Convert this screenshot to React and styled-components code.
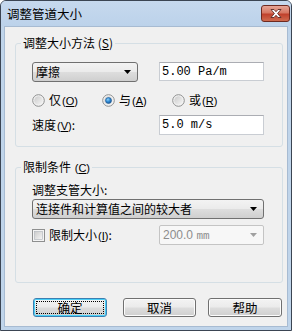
import React from "react";
import styled, { createGlobalStyle } from "styled-components";

const GlobalStyle = createGlobalStyle`
  body {
    margin: 0;
    background: #ffffff;
    font-family: "Noto Sans CJK SC", "Liberation Sans", sans-serif;
    font-size: 12px;
    color: #000;
  }
`;

const Window = styled.div`
  width: 292px;
  height: 331px;
  box-sizing: border-box;
  border: 1px solid #3b4553;
  border-radius: 6px 6px 0 0;
  background: #bfd4ea;
  display: flex;
  flex-direction: column;
`;

const TitleBar = styled.div`
  height: 25px;
  flex: none;
  display: flex;
  align-items: center;
  justify-content: space-between;
  padding: 0 1px 0 6px;
  background: linear-gradient(#c6d9ee, #bcd2ea);
  border-radius: 5px 5px 0 0;
`;

const Title = styled.span`
  font-size: 12.5px;
  line-height: 16px;
  margin-top: 1px;
`;

const CloseButton = styled.div`
  width: 29px;
  height: 17px;
  box-sizing: border-box;
  border: 1px solid #6e2a20;
  border-radius: 3px;
  background: linear-gradient(#e7a596 0%, #d67863 45%, #c0412c 55%, #cf6b4f 100%);
  display: flex;
  align-items: center;
  justify-content: center;
  margin-top: -1px;
`;

const Client = styled.div`
  flex: 1;
  margin: 0 3px 3px 3px;
  border: 1px solid #a7bbd2;
  background: #f0f0f0;
  padding: 9px 4px 0 10px;
  display: flex;
  flex-direction: column;
`;

const Group = styled.fieldset`
  margin: 0 0 ${(p) => p.$gap || 0}px 0;
  padding: 0;
  border: 1px solid #d5dfe5;
  border-radius: 3px;
  min-width: 0;
`;

const Legend = styled.legend`
  margin-left: 5px;
  padding: 0 2px;
  line-height: 14px;
  font-size: 12px;
`;

const GroupBody = styled.div`
  padding: ${(p) => p.$top}px 18px ${(p) => p.$bottom}px 16px;
  display: flex;
  flex-direction: column;
`;

const Row = styled.div`
  display: flex;
  align-items: center;
  justify-content: ${(p) => p.$justify || "space-between"};
  height: ${(p) => p.$h || 20}px;
  margin-top: ${(p) => p.$mt || 0}px;
`;

const Combo = styled.div`
  width: ${(p) => p.$w}px;
  height: 20px;
  box-sizing: border-box;
  border: 1px solid #707070;
  border-radius: 3px;
  background: linear-gradient(#f3f3f3 0%, #ebebeb 48%, #dddddd 52%, #cfcfcf 100%);
  display: flex;
  align-items: center;
  justify-content: space-between;
  padding: 0 6px 0 3px;
  line-height: 16px;
`;

const TextBox = styled.div`
  width: 105px;
  height: ${(p) => p.$h || 20}px;
  box-sizing: border-box;
  border: 1px solid #c9cdd3;
  border-top-color: #abadb3;
  background: #ffffff;
  display: flex;
  align-items: center;
  padding-left: 2px;
  font-family: "Liberation Mono", monospace;
  font-size: 12px;
  align-self: ${(p) => p.$align || "center"};
`;

const DisabledCombo = styled.div`
  width: 105px;
  height: 20px;
  box-sizing: border-box;
  border: 1px solid #c4c4c4;
  border-radius: 2px;
  background: #f7f7f7;
  color: #8d8d8d;
  display: flex;
  align-items: center;
  justify-content: space-between;
  padding: 0 6px 0 3px;
  font-family: "Liberation Sans", sans-serif;
  font-size: 12px;
`;

const Mm = styled.span`
  font-family: "Liberation Mono", monospace;
  font-size: 11px;
`;

const Option = styled.label`
  display: flex;
  align-items: center;
  gap: 4px;
  width: ${(p) => p.$w}px;
  line-height: 14px;
`;

const Acc = styled.span`
  font-family: "Liberation Sans", sans-serif;
  font-size: 11px;
  margin-left: 1px;
`;

const Label = styled.span`
  line-height: 14px;
`;

const Buttons = styled.div`
  display: flex;
  margin-top: 15px;
  padding-left: 18px;
`;

const Button = styled.div`
  width: ${(p) => p.$w || 74}px;
  height: 19px;
  margin-left: ${(p) => p.$ml || 0}px;
  box-sizing: border-box;
  border: 1px solid ${(p) => (p.$default ? "#3c7fb1" : "#707070")};
  border-radius: 3px;
  background: linear-gradient(#f3f3f3 0%, #ebebeb 48%, #dddddd 52%, #cfcfcf 100%);
  box-shadow: ${(p) => (p.$default ? "inset 0 0 0 1px #48d0f8" : "inset 0 0 0 1px #fcfcfc")};
  display: flex;
  align-items: center;
  justify-content: center;
  font-size: 12.5px;
  line-height: 15px;
  padding: 1px;
`;

const Focus = styled.div`
  flex: 1;
  align-self: stretch;
  margin: 1px;
  border: 1px dotted #000;
  display: flex;
  align-items: center;
  justify-content: center;
`;

const Arrow = ({ color = "#000" }) => (
  <svg width="7" height="4" viewBox="0 0 7 4">
    <path d="M0 0h7L3.5 4z" fill={color} />
  </svg>
);

const Radio = ({ checked }) => (
  <svg width="13" height="13" viewBox="0 0 13 13">
    <defs>
      <linearGradient id="rg" x1="0" y1="0" x2="1" y2="1">
        <stop offset="0" stopColor="#cbcbcb" />
        <stop offset="1" stopColor="#f6f6f6" />
      </linearGradient>
      <radialGradient id="rd" cx="0.4" cy="0.35" r="0.7">
        <stop offset="0" stopColor="#8fd2fb" />
        <stop offset="0.5" stopColor="#2f8ad4" />
        <stop offset="1" stopColor="#1a4f8c" />
      </radialGradient>
    </defs>
    <circle cx="6.5" cy="6.5" r="5.8" fill="#f4f4f4" stroke="#8e8f8f" strokeWidth="1" />
    <circle cx="6.5" cy="6.5" r="4.3" fill="url(#rg)" />
    {checked && <circle cx="6.5" cy="6.5" r="3" fill="url(#rd)" stroke="#1d5d99" strokeWidth="0.6" />}
  </svg>
);

const Check = () => (
  <svg width="13" height="13" viewBox="0 0 13 13">
    <defs>
      <linearGradient id="cg" x1="0" y1="0" x2="1" y2="1">
        <stop offset="0" stopColor="#cbcbcb" />
        <stop offset="1" stopColor="#f6f6f6" />
      </linearGradient>
    </defs>
    <rect x="0.5" y="0.5" width="12" height="12" fill="#f4f4f4" stroke="#8e8f8f" />
    <rect x="2.5" y="2.5" width="8" height="8" fill="url(#cg)" stroke="#aeb3b9" strokeWidth="0.6" />
  </svg>
);

const CloseIcon = () => (
  <svg width="14" height="11" viewBox="0 0 14 11">
    <path
      d="M2 1.5h3l2 2.2 2-2.2h3L8.6 5.5 12 9.5H9L7 7.3 5 9.5H2l3.4-4z"
      fill="#ffffff"
      stroke="#5a2a24"
      strokeWidth="0.9"
      strokeLinejoin="round"
    />
  </svg>
);

export default function App() {
  return (
    <>
      <GlobalStyle />
      <Window>
        <TitleBar>
          <Title>调整管道大小</Title>
          <CloseButton>
            <CloseIcon />
          </CloseButton>
        </TitleBar>
        <Client>
          <Group $gap={13}>
            <Legend>
              调整大小方法 (<u>S</u>)
            </Legend>
            <GroupBody $top={12} $bottom={11}>
              <Row>
                <Combo $w={106}>
                  <span>摩擦</span>
                  <Arrow />
                </Combo>
                <TextBox $h={19} $align="flex-start">5.00 Pa/m</TextBox>
              </Row>
              <Row $h={16} $mt={10} $justify="flex-start">
                <Option $w={70}>
                  <Radio />
                  <span>
                    仅<Acc>(<u>O</u>)</Acc>
                  </span>
                </Option>
                <Option $w={70}>
                  <Radio checked />
                  <span>
                    与<Acc>(<u>A</u>)</Acc>
                  </span>
                </Option>
                <Option $w={70}>
                  <Radio />
                  <span>
                    或<Acc>(<u>R</u>)</Acc>
                  </span>
                </Option>
              </Row>
              <Row $mt={7}>
                <Label>
                  速度<Acc>(<u>V</u>)</Acc>:
                </Label>
                <TextBox>5.0 m/s</TextBox>
              </Row>
            </GroupBody>
          </Group>
          <Group>
            <Legend>
              限制条件 <Acc>(<u>C</u>)</Acc>
            </Legend>
            <GroupBody $top={8} $bottom={37}>
              <Label>调整支管大小:</Label>
              <Row $mt={2}>
                <Combo $w={232}>
                  <span>连接件和计算值之间的较大者</span>
                  <Arrow />
                </Combo>
              </Row>
              <Row $mt={6}>
                <Option $w={120}>
                  <Check />
                  <span>
                    限制大小<Acc>(<u>I</u>)</Acc>:
                  </span>
                </Option>
                <DisabledCombo>
                  <span>
                    200.0 <Mm>mm</Mm>
                  </span>
                  <Arrow color="#a0a0a0" />
                </DisabledCombo>
              </Row>
            </GroupBody>
          </Group>
          <Buttons>
            <Button $default>
              <Focus>确定</Focus>
            </Button>
            <Button $w={73} $ml={16}>取消</Button>
            <Button $ml={12}>帮助</Button>
          </Buttons>
        </Client>
      </Window>
    </>
  );
}
